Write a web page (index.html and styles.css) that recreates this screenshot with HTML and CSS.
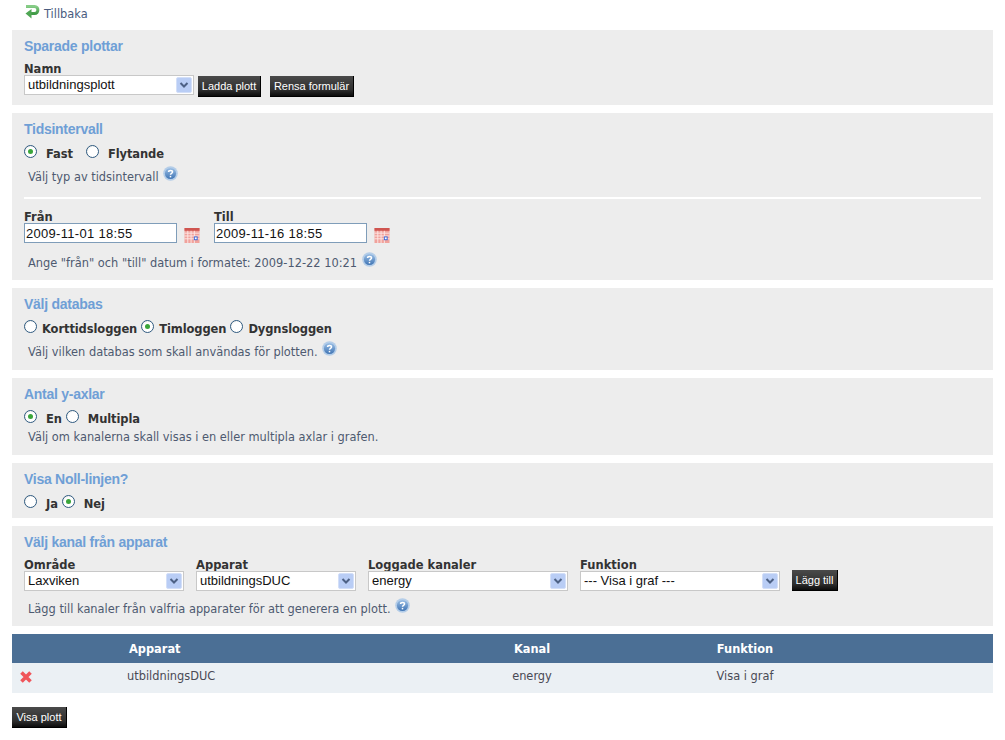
FILE: index.html
```html
<!DOCTYPE html>
<html lang="sv">
<head>
<meta charset="utf-8">
<title>Plott</title>
<link rel="stylesheet" href="styles.css">
</head>
<body>
<svg class="defs" width="0" height="0" aria-hidden="true">
  <defs>
    <linearGradient id="helpg" x1="0" y1="0" x2="0" y2="1"><stop offset="0" stop-color="#9cc0e6"/><stop offset="1" stop-color="#3f74b4"/></linearGradient>
    <linearGradient id="backg" x1="0" y1="0" x2="0" y2="1"><stop offset="0" stop-color="#86cc86"/><stop offset="1" stop-color="#3f9a45"/></linearGradient>
    <symbol id="help" viewBox="0 0 14 14">
      <circle cx="7" cy="7" r="6.8" fill="#b4cde8"/>
      <circle cx="7" cy="7" r="5.2" fill="url(#helpg)"/>
      <path d="M5.2 5.6C5.2 3.6 8.9 3.6 8.9 5.6C8.9 7 7 6.8 7 8.2" fill="none" stroke="#fff" stroke-width="1.4"/>
      <rect x="6.3" y="9.2" width="1.4" height="1.4" fill="#fff"/>
    </symbol>
    <symbol id="chev" viewBox="0 0 16 16">
      <rect x=".5" y=".5" width="15" height="15" rx="1.5" fill="#b9cdf5" stroke="#d3dff8"/>
      <path d="M4.5 6L8 9.5L11.5 6" fill="none" stroke="#4d6185" stroke-width="2"/>
    </symbol>
    <symbol id="cal" viewBox="0 0 16 16">
      <rect x="0" y="0" width="16" height="16" fill="#f0a29c"/>
      <rect x="0" y="0" width="16" height="3" fill="#cf5550"/>
      <path d="M0 5.5H16M0 8.5H16M0 11.5H16M3.5 3V16M7 3V16M10.5 3V16" stroke="#fde6e4" stroke-width="1"/>
      <rect x="10" y="9" width="4" height="4" fill="#3565d8"/>
      <rect x="11" y="10" width="2" height="2" fill="#fff"/>
    </symbol>
  </defs>
</svg>

<a class="back" href="#">
  <svg class="back-icon" viewBox="0 0 15 15" width="15" height="15" aria-hidden="true">
    <path d="M1 2.5H9.5C14 2.5 14 9.5 9.5 9.5H5" fill="none" stroke="url(#backg)" stroke-width="3"/>
    <path d="M6.5 5V14.5L.5 9.5Z" fill="#4fa654"/>
  </svg>
  <span>Tillbaka</span>
</a>

<section class="panel p-saved">
  <h2>Sparade plottar</h2>
  <div class="row">
    <div class="field">
      <label>Namn</label>
      <div class="select w170"><span>utbildningsplott</span><svg class="chev"><use href="#chev"/></svg></div>
    </div>
    <button class="btn b-load">Ladda plott</button>
    <button class="btn b-clear">Rensa formulär</button>
  </div>
</section>

<section class="panel p-time">
  <h2>Tidsintervall</h2>
  <div class="radios wide">
    <span class="radio on"></span><b class="r-label">Fast</b>
    <span class="radio"></span><b class="r-label">Flytande</b>
  </div>
  <p class="help">Välj typ av tidsintervall <svg class="q"><use href="#help"/></svg></p>
  <hr>
  <div class="dates">
    <div class="field">
      <label>Från</label>
      <div class="date-line"><input class="date" value="2009-11-01 18:55"><svg class="cal"><use href="#cal"/></svg></div>
    </div>
    <div class="field">
      <label>Till</label>
      <div class="date-line"><input class="date" value="2009-11-16 18:55"><svg class="cal"><use href="#cal"/></svg></div>
    </div>
  </div>
  <p class="help h-date">Ange "från" och "till" datum i formatet: 2009-12-22 10:21 <svg class="q"><use href="#help"/></svg></p>
</section>

<section class="panel p-db">
  <h2>Välj databas</h2>
  <div class="radios tight">
    <span class="radio"></span><b class="r-label">Korttidsloggen</b>
    <span class="radio on"></span><b class="r-label">Timloggen</b>
    <span class="radio"></span><b class="r-label">Dygnsloggen</b>
  </div>
  <p class="help">Välj vilken databas som skall användas för plotten. <svg class="q"><use href="#help"/></svg></p>
</section>

<section class="panel p-axes">
  <h2>Antal y-axlar</h2>
  <div class="radios wide2">
    <span class="radio on"></span><b class="r-label">En</b>
    <span class="radio"></span><b class="r-label">Multipla</b>
  </div>
  <p class="help h-axes">Välj om kanalerna skall visas i en eller multipla axlar i grafen.</p>
</section>

<section class="panel p-zero">
  <h2>Visa Noll-linjen?</h2>
  <div class="radios wide2">
    <span class="radio"></span><b class="r-label">Ja</b>
    <span class="radio on"></span><b class="r-label">Nej</b>
  </div>
</section>

<section class="panel p-chan">
  <h2>Välj kanal från apparat</h2>
  <div class="row chan-row">
    <div class="field"><label>Område</label>
      <div class="select w160"><span>Laxviken</span><svg class="chev"><use href="#chev"/></svg></div></div>
    <div class="field"><label>Apparat</label>
      <div class="select w160"><span>utbildningsDUC</span><svg class="chev"><use href="#chev"/></svg></div></div>
    <div class="field"><label>Loggade kanaler</label>
      <div class="select w200"><span>energy</span><svg class="chev"><use href="#chev"/></svg></div></div>
    <div class="field"><label>Funktion</label>
      <div class="select w200"><span>--- Visa i graf ---</span><svg class="chev"><use href="#chev"/></svg></div></div>
    <button class="btn b-add">Lägg till</button>
  </div>
  <p class="help h-chan">Lägg till kanaler från valfria apparater för att generera en plott. <svg class="q"><use href="#help"/></svg></p>
</section>

<table class="list">
  <thead>
    <tr><th class="c-x"></th><th class="c-app">Apparat</th><th class="c-kan">Kanal</th><th class="c-fun">Funktion</th><th></th></tr>
  </thead>
  <tbody>
    <tr>
      <td class="c-x"><svg class="del" viewBox="0 0 14 14" width="14" height="14" aria-hidden="true"><path d="M2.5 2.5L11.5 11.5M11.5 2.5L2.5 11.5" stroke="#f0555a" stroke-width="3.6"/></svg></td>
      <td class="c-app">utbildningsDUC</td><td class="c-kan">energy</td><td class="c-fun">Visa i graf</td><td></td>
    </tr>
  </tbody>
</table>

<button class="btn b-show">Visa plott</button>
</body>
</html>
```

FILE: styles.css
```css
* { box-sizing: border-box; }
html, body { margin: 0; padding: 0; }
body {
  width: 1005px;
  height: 740px;
  overflow: hidden;
  padding: 0 12px;
  background: #fff;
  font: 11.4px/13px "DejaVu Sans", Verdana, sans-serif;
  color: #333;
}
.defs { position: absolute; }

.back {
  display: flex;
  align-items: flex-start;
  height: 30px;
  padding: 4px 0 0 13px;
  color: #4a5c80;
  text-decoration: none;
}
.back span { margin: 4px 0 0 4px; }
.back-icon { display: block; }

.panel {
  width: 981px;
  margin-bottom: 8px;
  padding: 0 12px;
  background: #ededed;
}
.p-saved { height: 75px; }
.p-time { height: 167px; }
.p-db { height: 82px; }
.p-axes { height: 77px; }
.p-zero { height: 55px; }
.p-chan { height: 100px; }

h2 {
  margin: 0;
  padding-top: 8px;
  font: bold 14px/16px "Liberation Sans", Arial, sans-serif;
  letter-spacing: -.27px;
  color: #6f9fd6;
}

.row { display: flex; align-items: flex-end; }
.p-saved .row { margin-top: 9px; }
.field { display: flex; flex-direction: column; }
label {
  display: block;
  font-size: 11.5px;
  font-weight: bold;
  line-height: 12px;
  color: #333;
}

.select {
  display: flex;
  align-items: center;
  justify-content: space-between;
  height: 20px;
  padding: 0 1px 0 3px;
  background: #fff;
  border: 1px solid #c8c8c8;
  font: 13px/16px "Liberation Sans", Arial, sans-serif;
  color: #111;
}
.w170 { width: 170px; }
.w160 { width: 160px; }
.w200 { width: 200px; }
.chev { width: 16px; height: 16px; flex: none; }

.btn {
  display: block;
  padding: 0;
  height: 21px;
  border: 0;
  border-bottom: 1px solid #000;
  border-right: 1px solid #000;
  background: linear-gradient(#4a4a4a, #2e2e2e 70%, #0c0c0c);
  color: #fff;
  font: 11px/19px "Liberation Sans", Arial, sans-serif;
  text-align: center;
}
.b-load { width: 63px; margin: 0 0 -2px 4px; }
.b-clear { width: 84px; margin: 0 0 -2px 9px; }
.b-add { width: 46px; }
.b-show { width: 55px; margin-top: 14px; }

.radios {
  display: flex;
  align-items: flex-start;
  margin-top: 8px;
  height: 16px;
}
.radio {
  flex: none;
  width: 13px;
  height: 13px;
  border: 1px solid #2f5a80;
  border-radius: 50%;
  background: radial-gradient(circle at 60% 60%, #fff 55%, #dcdcd6);
  position: relative;
}
.radio.on::after {
  content: "";
  position: absolute;
  left: 3px;
  top: 3px;
  width: 5px;
  height: 5px;
  border-radius: 50%;
  background: #3aa53a;
}
.r-label { margin-top: 3px; font-size: 11.5px; letter-spacing: -.1px; line-height: 13px; color: #333; }
.wide .r-label { margin-left: 9px; margin-right: 13px; }
.tight .r-label { margin-left: 5px; margin-right: 4px; }
.wide2 .r-label { margin-left: 9px; margin-right: 4px; }

.help {
  margin: 0;
  padding: 5px 0 0 4px;
  line-height: 13px;
  color: #4e5a70;
  white-space: nowrap;
}
.q { width: 15px; height: 15px; margin-left: 1px; }

hr {
  height: 2px;
  border: 0;
  margin: 13px 0 0 0;
  background: #fff;
  width: 957px;
}

.dates { display: flex; gap: 14px; margin-top: 12px; }
.date-line { display: flex; align-items: flex-end; }
.date {
  width: 153px;
  height: 20px;
  padding: 0 1px;
  border: 1px solid #7f9db9;
  background: #fff;
  font: 13px "Liberation Sans", Arial, sans-serif;
  letter-spacing: .3px;
  color: #111;
  outline: 0;
}
.cal { width: 16px; height: 15px; margin-left: 7px; }
.h-date { padding-top: 9px; }
.h-axes { padding-top: 5px; }
.p-chan .row { margin-top: 9px; gap: 12px; }
.h-chan { padding-top: 7px; }

.list {
  width: 981px;
  table-layout: fixed;
  border-collapse: collapse;
  border-spacing: 0;
}
.list th {
  height: 29px;
  padding: 1px 0 0;
  background: #4b6f95;
  color: #fff;
  font-weight: bold;
  text-align: left;
}
.list td {
  height: 30px;
  padding: 0 0 4px;
  background: #ebf0f4;
  color: #4a4a55;
}
.c-x { width: 115px; }
.c-app { width: 345px; }
.c-kan { width: 120px; text-align: center; }
.c-fun { width: 306px; text-align: center; }
.list th.c-kan, .list th.c-fun { text-align: center; }
.list th.c-app { padding-left: 2px; }
.del { display: block; margin: 2px 0 0 7px; }
```
